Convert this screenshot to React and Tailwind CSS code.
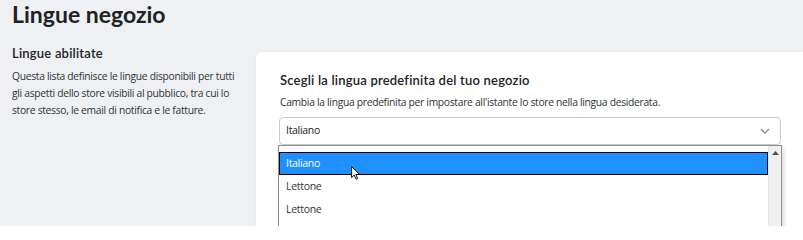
import React from "react";

const options = ["Italiano", "Lettone", "Lettone"];

export default function App() {
  return (
    <div className="w-[803px] h-[226px] overflow-hidden bg-[#eef0f3] text-[#202223] font-['Lato',sans-serif] relative">
      <h1 className="pl-3 text-[23px] leading-[28px] font-bold">Lingue negozio</h1>

      <div className="flex items-start mt-[16px]">
        {/* left description */}
        <div className="w-[256px] pl-3 pr-5 shrink-0">
          <h2 className="text-[13px] leading-[18px] font-semibold tracking-[0.2px]">Lingue abilitate</h2>
          <p className="mt-[6px] text-[10.3px] leading-[17px] tracking-[-0.3px] text-[#303234] font-['Open_Sans',sans-serif]">
            Questa lista definisce le lingue disponibili per tutti gli aspetti dello store visibili al pubblico, tra cui lo store stesso, le email di notifica e le fatture.
          </p>
        </div>

        {/* card */}
        <div className="flex-1 mt-[8px] bg-white rounded-l-[6px] shadow-[0_0_2px_rgba(0,0,0,0.08)] h-[200px] pl-6 pr-[22px] pt-[19px]">
          <h3 className="text-[13px] leading-[18px] font-semibold tracking-[0.2px]">Scegli la lingua predefinita del tuo negozio</h3>
          <div className="font-['Open_Sans',sans-serif] tracking-[-0.3px]">
            <p className="mt-[5px] text-[10.3px] leading-[17px] text-[#303234]">
              Cambia la lingua predefinita per impostare all'istante lo store nella lingua desiderata.
            </p>

            <div className="mt-[6px] ml-[-1px] relative">
              <div className="h-[28px] border border-[#c9cccf] rounded-[4px] flex items-center justify-between pl-[6px] pr-[10px] text-[10.5px]">
                <span>Italiano</span>
                <svg width="10" height="6" viewBox="0 0 10 6" fill="none">
                  <path d="M1 1l4 4 4-4" stroke="#8c9196" strokeWidth="1.4" />
                </svg>
              </div>

              {/* open native list */}
              <div className="absolute left-[-1px] right-[-1px] top-[28px] h-[90px] bg-white border border-[#8f8f8f] border-b-0 shadow-[2px_2px_4px_rgba(0,0,0,0.15)] flex">
                <ul className="flex-1 pt-[6px] text-[10.5px]">
                  {options.map((o, i) => (
                    <li
                      key={i}
                      className={
                        i === 0
                          ? "h-[23px] flex items-center pl-[6px] bg-[#1e90ff] text-white border border-black"
                          : "h-[23px] flex items-center pl-[7px] text-[#333]"
                      }
                    >
                      {o}
                    </li>
                  ))}
                </ul>
                <div className="w-[13px] bg-[#f0f0f0] border-l border-[#e4e4e4] flex justify-center pt-[5px]">
                  <svg width="7" height="4" viewBox="0 0 7 4">
                    <path d="M0 4L3.5 0 7 4z" fill="#505050" />
                  </svg>
                </div>
              </div>
            </div>
          </div>
        </div>
      </div>

      {/* mouse cursor */}
      <svg className="absolute left-[351px] top-[166px]" width="9" height="14" viewBox="0 0 12 19">
        <path d="M0.7 0.7v15l3.6-3.4 2.4 5.6 2.2-1-2.4-5.4h5z" fill="white" stroke="black" strokeWidth="1.3" strokeLinejoin="round" />
      </svg>
    </div>
  );
}
